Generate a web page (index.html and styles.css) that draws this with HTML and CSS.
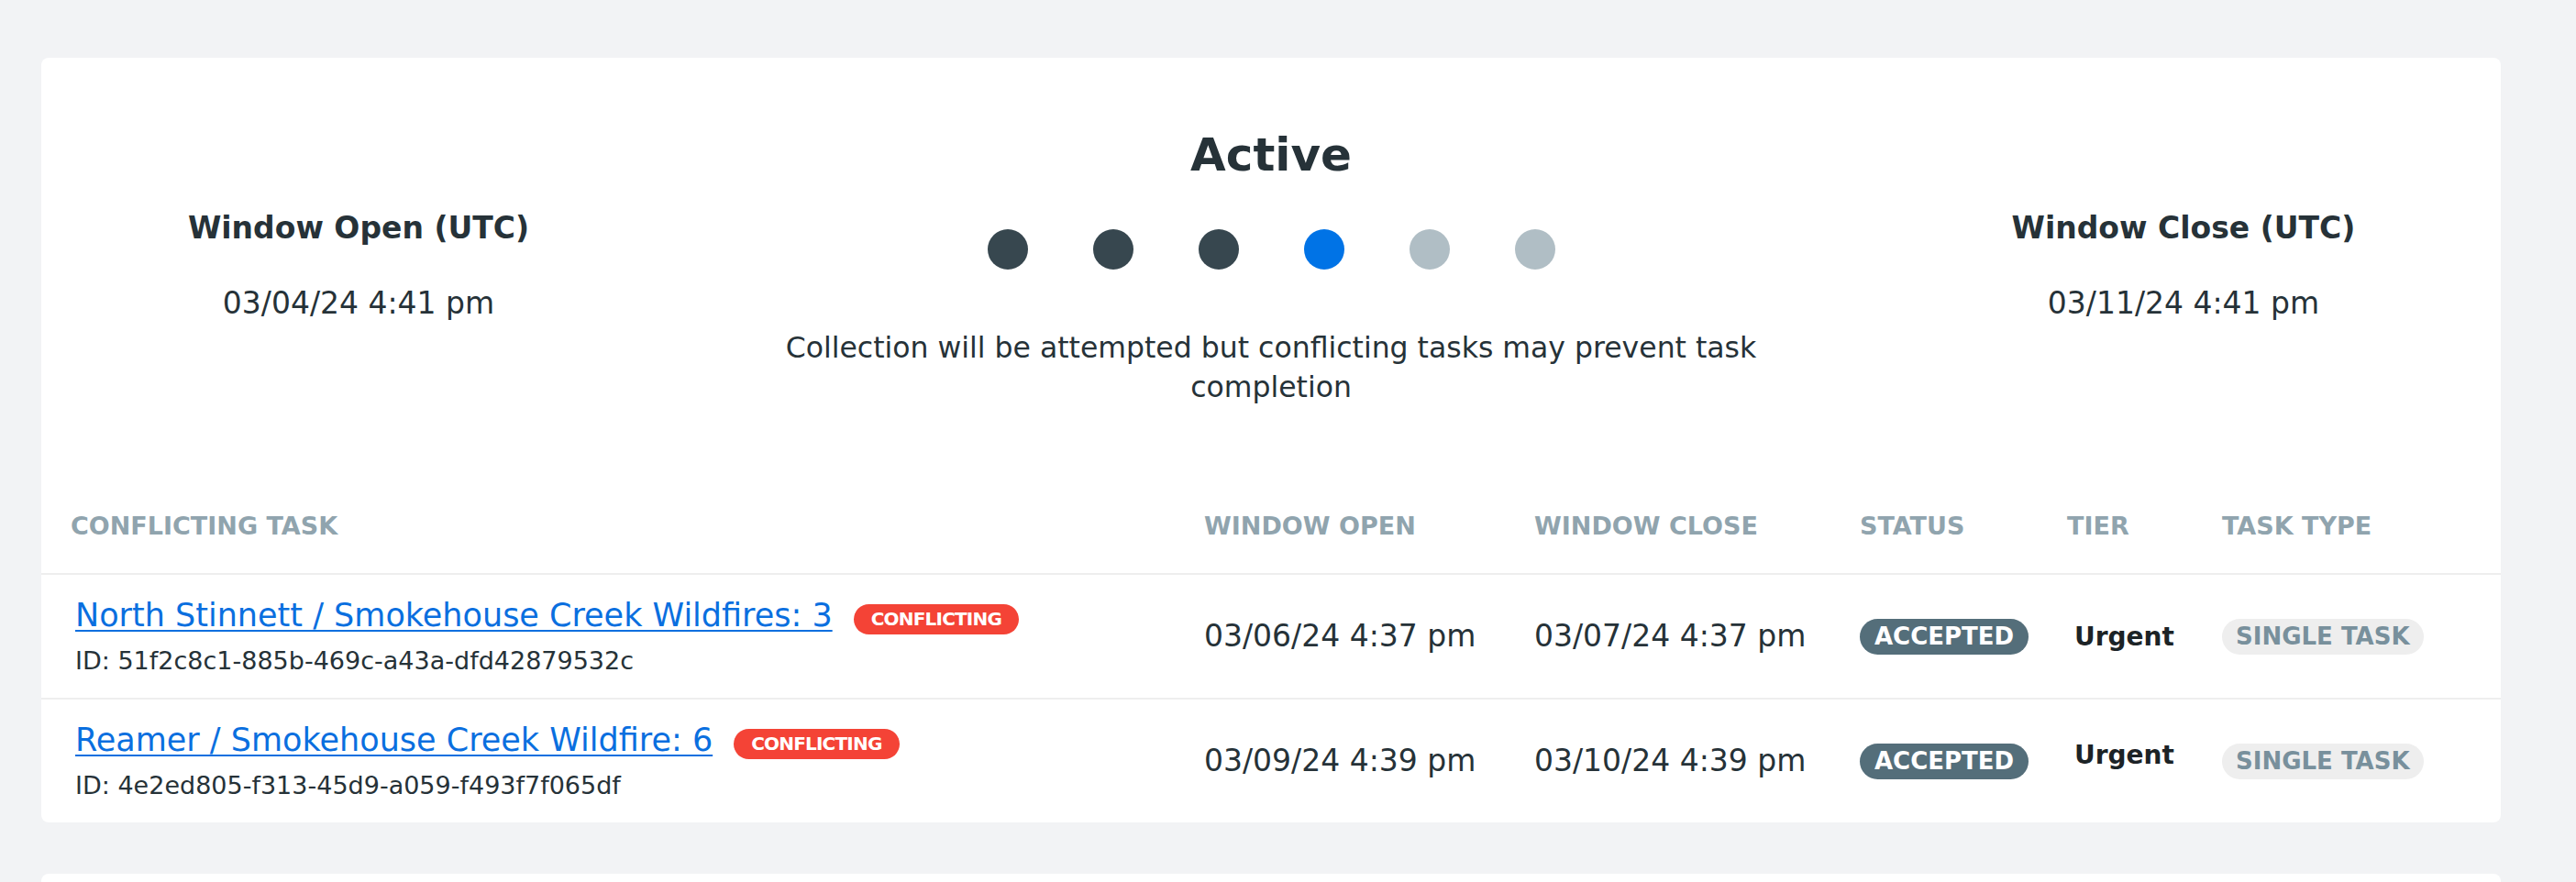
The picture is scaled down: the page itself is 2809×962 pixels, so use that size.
FILE: index.html
```html
<!DOCTYPE html>
<html lang="en">
<head>
    <meta charset="UTF-8">
    <meta name="viewport" content="width=device-width, initial-scale=1.0">
    <title>Task Window</title>
    <link rel="stylesheet" href="styles.css">
</head>
<body>
    <div class="page">
        <div class="card">
            <div class="status-panel">
                <div class="window-col">
                    <div class="window-label">Window Open (UTC)</div>
                    <div class="window-date">03/04/24 4:41 pm</div>
                </div>
                <div class="status-col">
                    <div class="status-title">Active</div>
                    <div class="steps">
                        <span class="step done"></span>
                        <span class="step done"></span>
                        <span class="step done"></span>
                        <span class="step current"></span>
                        <span class="step"></span>
                        <span class="step"></span>
                    </div>
                    <p class="status-note">Collection will be attempted but conflicting tasks may prevent task completion</p>
                </div>
                <div class="window-col">
                    <div class="window-label">Window Close (UTC)</div>
                    <div class="window-date">03/11/24 4:41 pm</div>
                </div>
            </div>

            <table class="task-table">
                <colgroup>
                    <col class="col-task">
                    <col class="col-open">
                    <col class="col-close">
                    <col class="col-status">
                    <col class="col-tier">
                    <col class="col-type">
                </colgroup>
                <thead>
                    <tr>
                        <th>Conflicting Task</th>
                        <th>Window Open</th>
                        <th>Window Close</th>
                        <th>Status</th>
                        <th>Tier</th>
                        <th>Task Type</th>
                    </tr>
                </thead>
                <tbody>
                    <tr>
                        <td>
                            <div class="task-name">
                                <a href="#">North Stinnett / Smokehouse Creek Wildfires: 3</a>
                                <span class="badge badge-conflict">Conflicting</span>
                            </div>
                            <div class="task-id">ID: 51f2c8c1-885b-469c-a43a-dfd42879532c</div>
                        </td>
                        <td class="date-cell">03/06/24 4:37 pm</td>
                        <td class="date-cell">03/07/24 4:37 pm</td>
                        <td><span class="pill pill-accepted">Accepted</span></td>
                        <td><span class="tier">Urgent</span></td>
                        <td><span class="pill pill-type">Single Task</span></td>
                    </tr>
                    <tr>
                        <td>
                            <div class="task-name">
                                <a href="#">Reamer / Smokehouse Creek Wildfire: 6</a>
                                <span class="badge badge-conflict">Conflicting</span>
                            </div>
                            <div class="task-id">ID: 4e2ed805-f313-45d9-a059-f493f7f065df</div>
                        </td>
                        <td class="date-cell">03/09/24 4:39 pm</td>
                        <td class="date-cell">03/10/24 4:39 pm</td>
                        <td><span class="pill pill-accepted">Accepted</span></td>
                        <td><span class="tier tier-raised">Urgent</span></td>
                        <td><span class="pill pill-type">Single Task</span></td>
                    </tr>
                </tbody>
            </table>
        </div>

        <div class="card card-next"></div>
    </div>
</body>
</html>
```

FILE: styles.css
```css
body, html {
    margin: 0;
    padding: 0;
    background-color: #f2f3f5;
    font-family: "DejaVu Sans", Verdana, sans-serif;
    color: #263238;
}
.page {
    padding: 63px 82px 0 45px;
}
.card {
    background-color: #ffffff;
    border-radius: 8px;
    overflow: hidden;
}
.card-next {
    margin-top: 56px;
    height: 40px;
}

/* status summary */
.status-panel {
    display: grid;
    grid-template-columns: 692px 1fr 692px;
    align-items: center;
    text-align: center;
    padding: 76px 0 69px;
}
.window-col {
    margin-bottom: 4px;
}
.window-label {
    font-size: 33px;
    font-weight: bold;
    line-height: 40px;
}
.window-date {
    font-size: 33px;
    line-height: 40px;
    margin-top: 42px;
}
.status-title {
    font-size: 50px;
    font-weight: bold;
    line-height: 60px;
}
.steps {
    display: flex;
    justify-content: center;
    gap: 71px;
    margin-top: 51px;
}
.step {
    width: 44px;
    height: 44px;
    border-radius: 50%;
    background-color: #b0bec5;
}
.step.done {
    background-color: #37474f;
}
.step.current {
    background-color: #0073e6;
}
.status-note {
    max-width: 1120px;
    margin: 64px auto 0;
    font-size: 31.5px;
    line-height: 43px;
}

/* conflicting tasks */
.task-table {
    width: 100%;
    border-collapse: collapse;
    table-layout: fixed;
}
.col-task { width: 1268px; }
.col-open { width: 360px; }
.col-close { width: 355px; }
.col-status { width: 226px; }
.col-tier { width: 169px; }
.col-type { width: 304px; }
.task-table th {
    text-align: left;
    text-transform: uppercase;
    font-size: 27px;
    font-weight: bold;
    line-height: 33px;
    color: #90a4ae;
    padding: 44px 0 35px;
    border-bottom: 2px solid #eeeeee;
}
.task-table td {
    padding: 23px 0;
    vertical-align: middle;
    border-bottom: 2px solid #eeeeee;
}
.task-table tbody tr:last-child td {
    border-bottom: none;
}
.task-table th:first-child {
    padding-left: 32px;
}
.task-table td:first-child {
    padding-left: 37px;
}
.task-name {
    display: flex;
    align-items: center;
    gap: 23px;
    line-height: 42px;
}
.task-name a {
    font-size: 35px;
    color: #0a6fdf;
    text-decoration: underline;
    text-underline-offset: 4px;
    text-decoration-thickness: 2px;
}
.task-id {
    margin-top: 12px;
    font-size: 27px;
    line-height: 34px;
}
.badge {
    display: inline-block;
    height: 33px;
    line-height: 33px;
    padding: 0 19px;
    border-radius: 17px;
    font-size: 20px;
    letter-spacing: -0.8px;
    font-weight: bold;
    text-transform: uppercase;
    margin-top: 8px;
}
.badge-conflict {
    background-color: #f44336;
    color: #ffffff;
}
.date-cell {
    font-size: 33px;
    line-height: 40px;
}
.pill {
    display: inline-block;
    height: 39px;
    line-height: 39px;
    padding: 0 16px;
    border-radius: 20px;
    font-size: 26px;
    font-weight: bold;
    text-transform: uppercase;
}
.pill-accepted {
    background-color: #546e7a;
    color: #ffffff;
}
.pill-type {
    background-color: #eeeeee;
    color: #78909c;
    padding: 0 15px;
}
.tier {
    display: inline-block;
    padding-left: 8px;
    font-size: 28px;
    font-weight: bold;
    color: #1c2326;
}
.tier-raised {
    position: relative;
    top: -7px;
}
```
